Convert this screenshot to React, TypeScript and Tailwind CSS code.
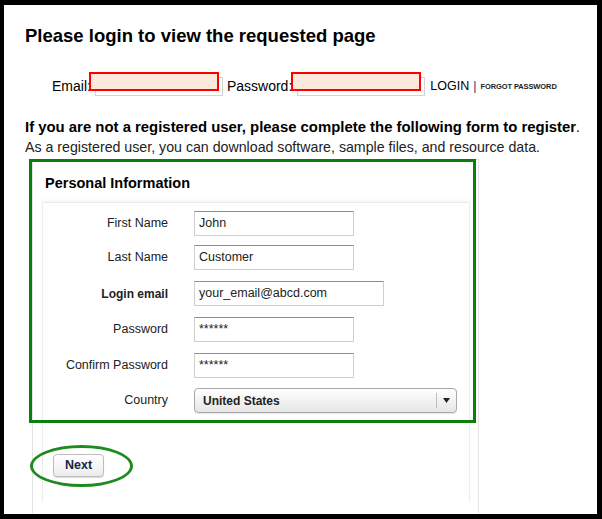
import { type FC, type ReactNode } from "react";

const font = { fontFamily: '"Liberation Sans", Arial, sans-serif' };

const Field: FC<{ label: string; bold?: boolean; children: ReactNode; className?: string }> = ({
  label,
  bold,
  children,
  className,
}) => (
  <div className={`flex items-center h-[25px] ${className ?? ""}`}>
    <div
      className={`w-[125px] text-right text-[#222] ${bold ? "font-bold text-[12px]" : "text-[12.5px]"}`}
    >
      {label}
    </div>
    <div className="ml-[26px]">{children}</div>
  </div>
);

const TextBox: FC<{ value: string; wide?: boolean; secret?: boolean }> = ({ value, wide, secret }) => (
  <div
    className={`h-[25px] ${wide ? "w-[190px]" : "w-[160px]"} border border-[#cfcfcf] border-t-[#8c8c8c] bg-white px-[4px] flex text-[12.5px] ${
      secret ? "items-start pt-[2px]" : "items-center"
    } text-[#222]`}
  >
    {value}
  </div>
);

const LoginBox: FC = () => (
  <div className="relative w-[128px] h-[19px] border border-[#d4d4d4] bg-white">
    <div className="absolute left-[-7px] top-[-6px] w-[130px] h-[19px] border-2 border-[#ff0000] bg-[#fde9dc]" />
  </div>
);

export default function App() {
  return (
    <div className="w-[602px] h-[519px] bg-black pt-[5px] pl-[4px] pr-[5px] pb-[5px]" style={font}>
      <div className="relative h-full bg-white overflow-hidden pl-[21px] pt-[20px] text-black">
        <h1 className="text-[18.5px] leading-[22px] font-bold">Please login to view the requested page</h1>

        <div className="mt-[30px] ml-[27px] flex items-center h-[19px] text-[14px] leading-[19px]">
          <span>Email:</span>
          <div className="ml-[4px]">
            <LoginBox />
          </div>
          <span className="ml-[4px]">Password:</span>
          <div className="ml-[5px]">
            <LoginBox />
          </div>
          <span className="ml-[5px] text-[12.5px]">LOGIN</span>
          <span className="ml-[4px] text-[12.5px] text-[#33336e]">|</span>
          <span className="ml-[4px] text-[7.5px] font-bold text-[#222] tracking-[-0.1px]">FORGOT PASSWORD</span>
        </div>

        <p className="mt-[21px] text-[14px] leading-[20px]">
          <span className="font-bold text-[14.9px]">If you are not a registered user, please complete the following form to register</span>.
        </p>
        <p className="text-[14.2px] leading-[20px] text-[#222]">
          As a registered user, you can download software, sample files, and resource data.
        </p>

        <div className="mt-[2px] ml-[7px] w-[447px] h-[400px] border-x border-t border-[#e4e4e4]">
          <h2 className="mt-[13px] ml-[12px] text-[14.5px] leading-[20px] font-bold">Personal Information</h2>
          <div className="mt-[9px] ml-[9px] w-[428px] h-[300px] border-x border-t border-[#ececec] shadow-[0_-2px_3px_rgba(0,0,0,0.04)] pt-[8px]">
            <Field label="First Name">
              <TextBox value="John" />
            </Field>
            <Field label="Last Name" className="mt-[9px]">
              <TextBox value="Customer" />
            </Field>
            <Field label="Login email" bold className="mt-[11px]">
              <TextBox value="your_email@abcd.com" wide />
            </Field>
            <Field label="Password" className="mt-[11px]">
              <TextBox value="******" secret />
            </Field>
            <Field label="Confirm Password" className="mt-[11px]">
              <TextBox value="******" secret />
            </Field>
            <Field label="Country" className="mt-[10px]">
              <div className="w-[263px] h-[25px] rounded-[4px] border border-[#a9a9a9] bg-gradient-to-b from-white to-[#e6e6e6] flex items-center shadow-[0_1px_1px_rgba(0,0,0,0.1)]">
                <span className="flex-1 pl-[8px] text-[12px] font-bold text-[#222]">United States</span>
                <span className="w-px h-[15px] bg-[#bdbdbd]" />
                <span className="w-[19px] flex justify-center">
                  <svg width="7" height="5" viewBox="0 0 7 5">
                    <path d="M0 0h7L3.5 5z" fill="#222" />
                  </svg>
                </span>
              </div>
            </Field>

            <button
              type="button"
              className="mt-[41px] ml-[10px] w-[51px] h-[23px] rounded-[4px] border border-[#bdbdbd] bg-gradient-to-b from-white to-[#ececec] text-[12.5px] font-bold text-[#1b2440] shadow-[0_1px_1px_rgba(0,0,0,0.15)]"
            >
              Next
            </button>
          </div>
        </div>

        <div className="absolute left-[25px] top-[154px] w-[447px] h-[264px] border-[3px] border-[#0b7f0b]" />
        <div className="absolute left-[26px] top-[440px] w-[103px] h-[42px] rounded-[50%] border-[3px] border-[#1f8a1f]" />
      </div>
    </div>
  );
}
